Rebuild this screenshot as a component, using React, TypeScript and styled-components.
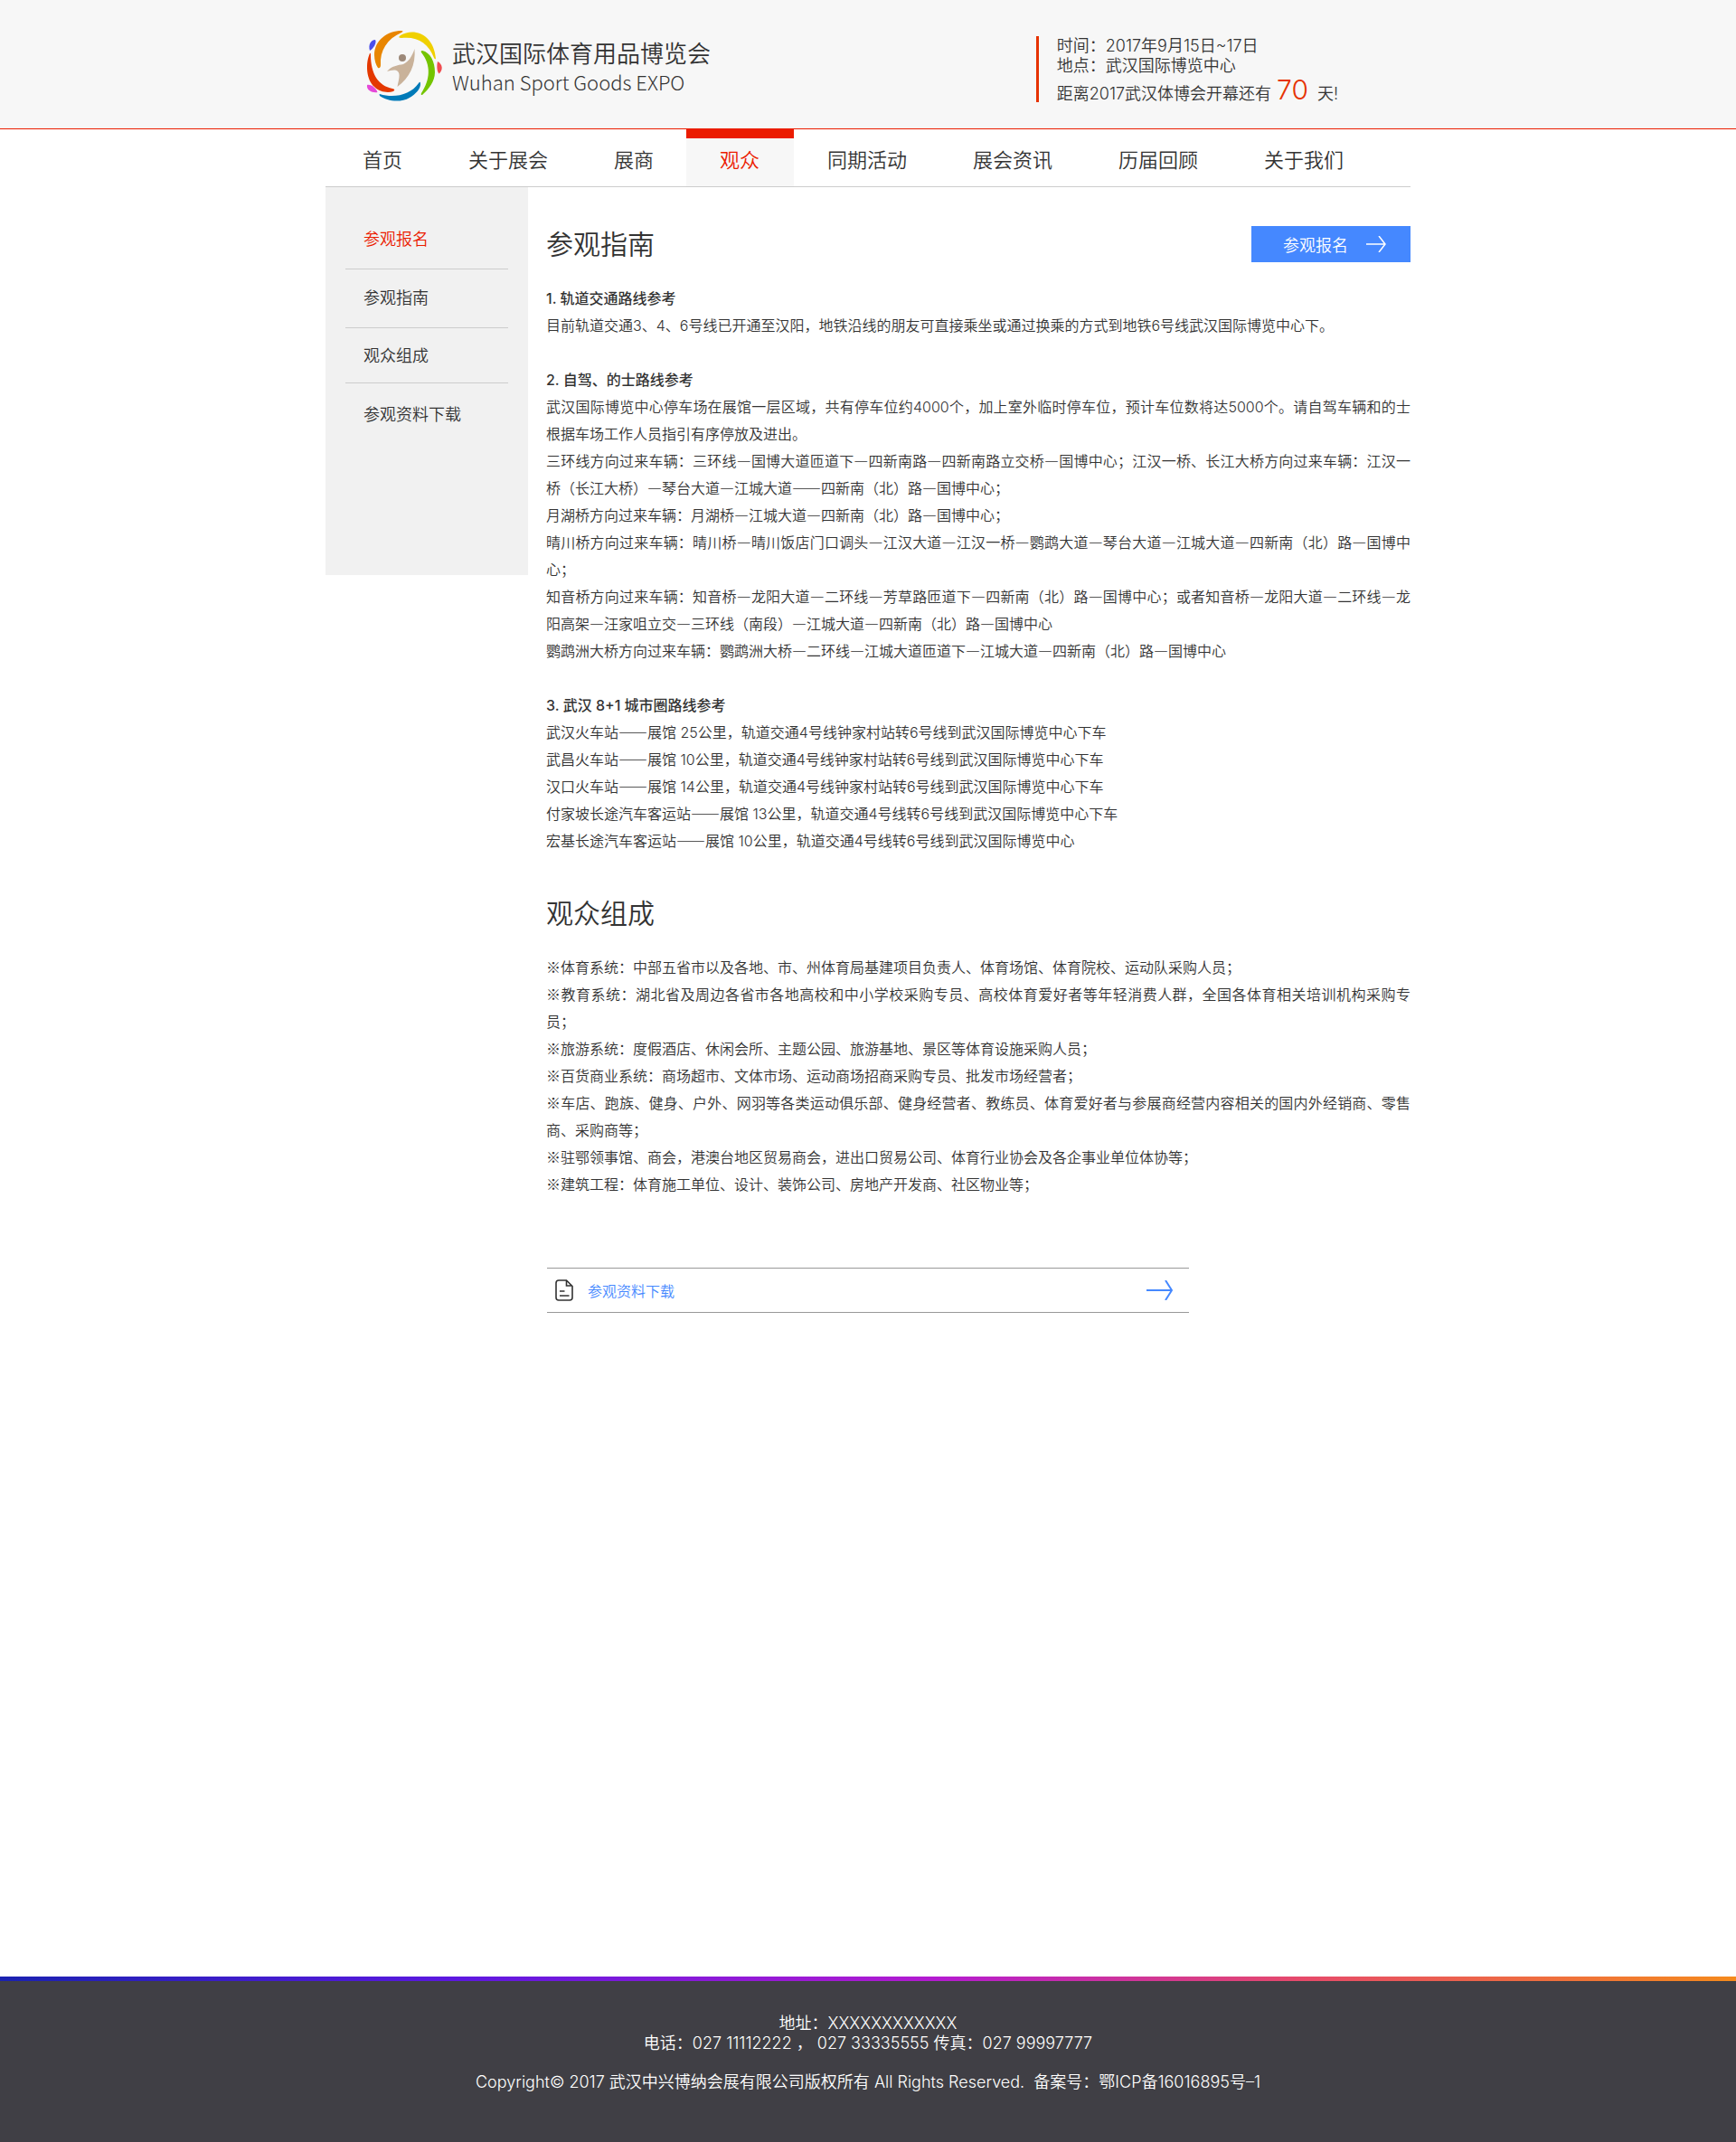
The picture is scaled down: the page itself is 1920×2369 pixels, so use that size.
import React from "react";
import styled, { createGlobalStyle } from "styled-components";

const cjk = `"Noto Sans CJK SC", sans-serif`;

const GlobalStyle = createGlobalStyle`
  *, *::before, *::after { box-sizing: border-box; }
  body {
    margin: 0;
    background: #fff;
    color: #333;
    font-family: ${cjk};
    font-size: 16px;
    font-weight: 350;
  }
  h1, h2, h3, p, ul { margin: 0; padding: 0; font-weight: 350; }
  ul { list-style: none; }
  a { color: inherit; text-decoration: none; }
`;

const Page = styled.div`
  display: flex;
  flex-direction: column;
  min-height: 100vh;
`;

const Container = styled.div`
  width: 100%;
  max-width: 1200px;
  margin: 0 auto;
`;

const Latin = styled.span`
  font-family: Inter, ${cjk};
  line-height: 1;
`;

const Header = styled.header`
  background: #f7f7f7;
  border-bottom: 1px solid #eb1c00;
`;

const HeaderInner = styled(Container)`
  display: flex;
  justify-content: space-between;
  height: 142px;
  padding: 32px 80px 0 44px;
`;

const Brand = styled.a`
  display: flex;
  align-items: flex-start;
  gap: 10px;
`;

const BrandText = styled.div`
  padding-top: 9px;
`;

const BrandName = styled.h1`
  font-size: 26px;
  line-height: 34px;
`;

const BrandEnglish = styled.p`
  font-size: 22px;
  font-weight: 300;
  line-height: 30px;
`;

const EventInfo = styled.div`
  align-self: flex-start;
  display: flex;
  flex-direction: column;
  height: 73px;
  margin-top: 8px;
  padding-left: 20px;
  border-left: 3px solid #e63200;
  font-size: 18px;
  line-height: 22px;
  white-space: nowrap;
`;

const InfoLine = styled.p`
  margin-top: -2px;
  margin-bottom: 2px;
`;

const Countdown = styled.p`
  display: flex;
  align-items: baseline;
  line-height: 36px;
`;

const Days = styled.strong`
  margin: 0 10px 0 6px;
  color: #e63200;
  font-family: Inter, ${cjk};
  font-size: 30px;
  font-weight: 300;
  line-height: 1;
`;

const NavBar = styled.nav`
  display: flex;
  padding-left: 4px;
  height: 64px;
  border-bottom: 1px solid #ccc;
`;

const NavLink = styled.a<{ $active?: boolean }>`
  padding: 0 ${(p) => (p.$active ? 38 : 36)}px 0 37px;
  margin-top: -1px;
  border-top: 11px solid ${(p) => (p.$active ? "#eb1c00" : "transparent")};
  background: ${(p) => (p.$active ? "#f7f7f7" : "none")};
  background-clip: padding-box;
  color: ${(p) => (p.$active ? "#eb1c00" : "#333")};
  font-size: 22px;
  line-height: 45px;
  white-space: nowrap;
`;

const Body = styled(Container)`
  display: flex;
  align-items: flex-start;
  gap: 20px;
`;

const Sidebar = styled.aside`
  flex: 0 0 224px;
  min-height: 429px;
  padding: 26px 22px;
  background: #f1f1f1;
`;

const SideLink = styled.a<{ $active?: boolean; $height: number; $line: number }>`
  display: block;
  height: ${(p) => p.$height}px;
  padding-left: 20px;
  color: ${(p) => (p.$active ? "#eb1c00" : "inherit")};
  font-size: 18px;
  line-height: ${(p) => p.$line}px;
`;

const SideItem = styled.li`
  & + & { border-top: 1px solid #ccc; }
`;

const Main = styled.main`
  flex: 1;
  min-width: 0;
  padding-top: 42px;
`;

const TitleRow = styled.div`
  display: flex;
  align-items: flex-start;
  justify-content: space-between;
  height: 40px;
`;

const Title = styled.h2`
  padding-bottom: 2px;
  font-size: 30px;
  line-height: 38px;
`;

const SignUp = styled.button`
  display: flex;
  align-items: center;
  gap: 20px;
  width: 176px;
  height: 40px;
  margin-top: 1px;
  padding: 0 0 0 35px;
  border: 0;
  background: #4588ff;
  color: #fff;
  font: 350 18px/40px ${cjk};
  cursor: pointer;
`;

const Article = styled.div`
  padding: 25px 0 45px;
  line-height: 30px;
  text-align: justify;
`;

const Block = styled.section`
  & + & { margin-top: 30px; }
`;

const BlockTitle = styled.h3`
  font-size: 16px;
  font-weight: 500;
`;

const Download = styled.a`
  display: flex;
  align-items: center;
  max-width: 710px;
  height: 50px;
  margin: 33px 0 0 1px;
  padding: 0 18px 0 9px;
  border: 1px solid #999;
  border-width: 1px 0;
  color: #4588ff;
`;

const DownloadLabel = styled.span`
  flex: 1;
  margin-left: 16px;
`;

const Footer = styled.footer`
  margin-top: auto;
  height: 183px;
  background: #403f45;
  color: #fff;
  font-size: 18px;
  line-height: 22px;
  text-align: center;
  white-space: pre-wrap;
  &::before {
    content: "";
    display: block;
    height: 5px;
    margin-bottom: 34px;
    background: linear-gradient(90deg, #1a22b0 0%, #5c18e0 26%, #b41bd0 54%, #e64a6a 75%, #f58a1c 100%);
  }
`;

const Copyright = styled.p`
  margin-top: 21px;
`;

/* Sets runs of Latin letters, digits and spaces in the Latin face. */
const Mixed = ({ children }: { children: string }) => (
  <>
    {children.split(/([\x20-\x7e©–]+)/).map((part, i) =>
      i % 2 ? <Latin key={i}>{part}</Latin> : part
    )}
  </>
);

const Logo = () => (
  <svg width="86" height="82" viewBox="0 0 86 82" aria-hidden="true">
    <path fill="#e88500" d="M40 2C25 2 10 12 10 29C10 35 12 40 14 43C16 44 17 42 17 40C16 24 24 11 40 4Q43 2 40 2Z" />
    <path fill="#f0d000" d="M39 7C54 -2 76 6 78 33Q77 34 76 32C70 16 58 8 40 10Q35 10 39 7Z" />
    <path fill="#74c400" d="M63 24C72 26 77 36 77 48C77 58 70 67 63 73Q61 73 62 71C72 56 73 40 62 26Q61 24 63 24Z" />
    <path fill="#007ab8" d="M16 72C32 77 50 73 59 60Q61 57 61 61C61 66 56 72 49 76C39 82 24 80 16 74Q15 72 16 72Z" />
    <path fill="#e43800" d="M5 27C0 38 1 56 10 64C16 70 25 71 31 69Q34 67 30 66C14 63 6 49 6 29Q6 26 5 27Z" />
    <path fill="#4a4eea" d="M5 24C3 18 6 12 11 12C13 15 9 22 5 24Z" />
    <path fill="#e548d8" d="M2 62C7 61 12 66 13.500 70C8 71 1 68 2 62Z" />
    <path fill="#f04c50" d="M80 36C86 39 86 46 81.500 49.500C79 47 79 40 80 36Z" />
    <circle cx="41" cy="32" r="4" fill="#9c8878" />
    <path fill="#c9b29a" d="M54.500 22C56 40 49 54 35.500 64C37 56 39 50 36 47C33 44 28 46 24 47C29 41 36 40 42 39C48 36 52 30 54.500 22Z" />
  </svg>
);

const Arrow = ({ width, height, stroke = 2 }: { width: number; height: number; stroke?: number }) => (
  <svg width={width} height={height} viewBox={`0 0 ${width} ${height}`} fill="none" stroke="currentColor" strokeWidth={stroke} aria-hidden="true">
    <path d={`M0 ${height / 2}H${width - 1}M${width - 8} 0L${width - 1} ${height / 2}L${width - 8} ${height}`} />
  </svg>
);

const FileIcon = () => (
  <svg width="20" height="24" viewBox="0 0 20 24" fill="none" stroke="#333" strokeWidth="1.6" aria-hidden="true">
    <path d="M12.500 1H4Q1 1 1 4V20Q1 23 4 23H16Q19 23 19 20V7.500ZM12.500 1V7H19M5 13H10.500M5 18H15.500" />
  </svg>
);

const navItems = ["首页", "关于展会", "展商", "观众", "同期活动", "展会资讯", "历届回顾", "关于我们"];

const sideItems = [
  { label: "参观报名", height: 64, line: 60 },
  { label: "参观指南", height: 64, line: 60 },
  { label: "观众组成", height: 60, line: 58 },
  { label: "参观资料下载", height: 68, line: 66 },
];

const guide = [
  {
    title: "1. 轨道交通路线参考",
    lines: ["目前轨道交通3、4、6号线已开通至汉阳，地铁沿线的朋友可直接乘坐或通过换乘的方式到地铁6号线武汉国际博览中心下。"],
  },
  {
    title: "2. 自驾、的士路线参考",
    lines: [
      "武汉国际博览中心停车场在展馆一层区域，共有停车位约4000个，加上室外临时停车位，预计车位数将达5000个。请自驾车辆和的士根据车场工作人员指引有序停放及进出。",
      "三环线方向过来车辆：三环线—国博大道匝道下—四新南路—四新南路立交桥—国博中心；江汉一桥、长江大桥方向过来车辆：江汉一桥（长江大桥）—琴台大道—江城大道——四新南（北）路—国博中心；",
      "月湖桥方向过来车辆：月湖桥—江城大道—四新南（北）路—国博中心；",
      "晴川桥方向过来车辆：晴川桥—晴川饭店门口调头—江汉大道—江汉一桥—鹦鹉大道—琴台大道—江城大道—四新南（北）路—国博中心；",
      "知音桥方向过来车辆：知音桥—龙阳大道—二环线—芳草路匝道下—四新南（北）路—国博中心；或者知音桥—龙阳大道—二环线—龙阳高架—汪家咀立交—三环线（南段）—江城大道—四新南（北）路—国博中心",
      "鹦鹉洲大桥方向过来车辆：鹦鹉洲大桥—二环线—江城大道匝道下—江城大道—四新南（北）路—国博中心",
    ],
  },
  {
    title: "3. 武汉 8+1 城市圈路线参考",
    lines: [
      "武汉火车站——展馆 25公里，轨道交通4号线钟家村站转6号线到武汉国际博览中心下车",
      "武昌火车站——展馆 10公里，轨道交通4号线钟家村站转6号线到武汉国际博览中心下车",
      "汉口火车站——展馆 14公里，轨道交通4号线钟家村站转6号线到武汉国际博览中心下车",
      "付家坡长途汽车客运站——展馆 13公里，轨道交通4号线转6号线到武汉国际博览中心下车",
      "宏基长途汽车客运站——展馆 10公里，轨道交通4号线转6号线到武汉国际博览中心",
    ],
  },
];

const audience = [
  "※体育系统：中部五省市以及各地、市、州体育局基建项目负责人、体育场馆、体育院校、运动队采购人员；",
  "※教育系统：湖北省及周边各省市各地高校和中小学校采购专员、高校体育爱好者等年轻消费人群，全国各体育相关培训机构采购专员；",
  "※旅游系统：度假酒店、休闲会所、主题公园、旅游基地、景区等体育设施采购人员；",
  "※百货商业系统：商场超市、文体市场、运动商场招商采购专员、批发市场经营者；",
  "※车店、跑族、健身、户外、网羽等各类运动俱乐部、健身经营者、教练员、体育爱好者与参展商经营内容相关的国内外经销商、零售商、采购商等；",
  "※驻鄂领事馆、商会，港澳台地区贸易商会，进出口贸易公司、体育行业协会及各企事业单位体协等；",
  "※建筑工程：体育施工单位、设计、装饰公司、房地产开发商、社区物业等；",
];

export default function App() {
  return (
    <Page lang="zh-CN">
      <GlobalStyle />
      <Header>
        <HeaderInner>
          <Brand href="#">
            <Logo />
            <BrandText>
              <BrandName>武汉国际体育用品博览会</BrandName>
              <BrandEnglish>Wuhan Sport Goods EXPO</BrandEnglish>
            </BrandText>
          </Brand>
          <EventInfo>
            <InfoLine><Mixed>时间：2017年9月15日~17日</Mixed></InfoLine>
            <InfoLine>地点：武汉国际博览中心</InfoLine>
            <Countdown>
              <span><Mixed>距离2017武汉体博会开幕还有</Mixed></span>
              <Days>70</Days>
              <span><Mixed>天!</Mixed></span>
            </Countdown>
          </EventInfo>
        </HeaderInner>
      </Header>
      <Container>
        <NavBar>
          {navItems.map((item) => (
            <NavLink key={item} href="#" $active={item === "观众"}>{item}</NavLink>
          ))}
        </NavBar>
      </Container>
      <Body>
        <Sidebar>
          <ul>
            {sideItems.map((item, i) => (
              <SideItem key={item.label}>
                <SideLink href="#" $active={i === 0} $height={item.height} $line={item.line}>{item.label}</SideLink>
              </SideItem>
            ))}
          </ul>
        </Sidebar>
        <Main>
          <TitleRow>
            <Title>参观指南</Title>
            <SignUp type="button">
              参观报名
              <Arrow width={22} height={18} stroke={1.5} />
            </SignUp>
          </TitleRow>
          <Article>
            {guide.map((block) => (
              <Block key={block.title}>
                <BlockTitle><Mixed>{block.title}</Mixed></BlockTitle>
                {block.lines.map((line) => (
                  <p key={line}><Mixed>{line}</Mixed></p>
                ))}
              </Block>
            ))}
          </Article>
          <Title>观众组成</Title>
          <Article>
            {audience.map((line) => (
              <p key={line}>{line}</p>
            ))}
          </Article>
          <Download href="#">
            <FileIcon />
            <DownloadLabel>参观资料下载</DownloadLabel>
            <Arrow width={29} height={22} />
          </Download>
        </Main>
      </Body>
      <Footer>
        <p><Mixed>地址：XXXXXXXXXXXX</Mixed></p>
        <p><Mixed>电话：027 11112222 ， 027 33335555 传真：027 99997777</Mixed></p>
        <Copyright><Mixed>Copyright© 2017 武汉中兴博纳会展有限公司版权所有 All Rights Reserved.  备案号：鄂ICP备16016895号–1</Mixed></Copyright>
      </Footer>
    </Page>
  );
}
